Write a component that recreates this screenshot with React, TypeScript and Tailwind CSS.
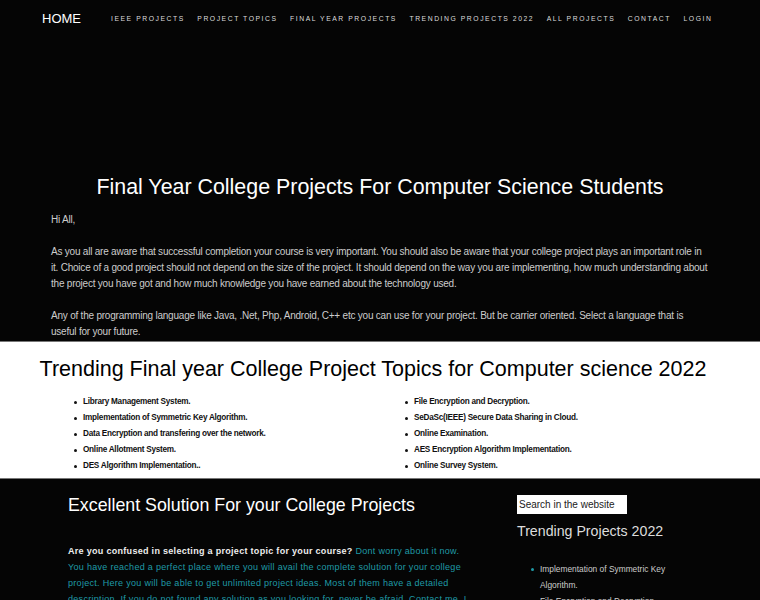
const NAV = ["IEEE PROJECTS", "PROJECT TOPICS", "FINAL YEAR PROJECTS", "TRENDING PROJECTS 2022", "ALL PROJECTS", "CONTACT", "LOGIN"];

const LEFT = [
  "Library Management System.",
  "Implementation of Symmetric Key Algorithm.",
  "Data Encryption and transfering over the network.",
  "Online Allotment System.",
  "DES Algorithm Implementation..",
];

const RIGHT = [
  "File Encryption and Decryption.",
  "SeDaSc(IEEE) Secure Data Sharing in Cloud.",
  "Online Examination.",
  "AES Encryption Algorithm Implementation.",
  "Online Survey System.",
];

function TopicList({ items }: { items: string[] }) {
  return (
    <ul className="flex flex-col">
      {items.map((t) => (
        <li key={t} className="flex h-4 items-center gap-[6px] whitespace-nowrap text-[8.2px] font-bold tracking-[-0.25px] text-[#111]">
          <span className="h-[3px] w-[3px] rounded-full bg-[#111]" />
          {t}
        </li>
      ))}
    </ul>
  );
}

export default function App() {
  return (
    <div className="min-h-[600px] overflow-hidden bg-[#050505] font-['Liberation_Sans',Arial,sans-serif]">
      <nav className="flex h-[38px] items-center whitespace-nowrap pl-[42px]">
        <span className="w-[69px] shrink-0 text-[13px] text-white">HOME</span>
        <div className="flex gap-[12.5px]">
          {NAV.map((n) => (
            <span key={n} className="shrink-0 text-[6.8px] tracking-[1.55px] text-[#ddd]">{n}</span>
          ))}
        </div>
      </nav>

      <section className="px-[51px] pb-[1px] pt-[136px]">
        <h1 className="text-center text-[21.4px] leading-[26px] text-white">Final Year College Projects For Computer Science Students</h1>
        <div className="mt-[12px] space-y-4 text-[10px] leading-4 tracking-[-0.22px] text-[#ccc]">
          <p>Hi All,</p>
          <p>
            As you all are aware that successful completion your course is very important. You should also be aware that your college project plays an important role in it. Choice of a good project should not depend on the size of the project. It should depend on the way you are implementing, how much understanding about the project you have got and how much knowledge you have earned about the technology used.
          </p>
          <p>
            Any of the programming language like Java, .Net, Php, Android, C++ etc you can use for your project. But be carrier oriented. Select a language that is useful for your future.
          </p>
        </div>
      </section>

      <section className="border-y border-[#777] bg-white pb-[4px] pt-[13px]">
        <h2 className="pr-[14px] text-center text-[21.5px] leading-[28px] text-black">Trending Final year College Project Topics for Computer science 2022</h2>
        <div className="mt-[11px] flex pl-[74px]">
          <div className="w-[331px]">
            <TopicList items={LEFT} />
          </div>
          <TopicList items={RIGHT} />
        </div>
      </section>

      <section className="flex pt-[14px]">
        <div className="w-[472px] shrink-0 pl-[68px]">
          <h3 className="whitespace-nowrap text-[17.8px] leading-6 text-white">Excellent Solution For your College Projects</h3>
          <p className="mt-[26px] text-[9px] leading-4 tracking-[0.3px] text-[#1f9aa6]">
            <b className="text-[#eee]">Are you confused in selecting a project topic for your course?</b> Dont worry about it now. You have reached a perfect place where you will avail the complete solution for your college project. Here you will be able to get unlimited project ideas. Most of them have a detailed description. If you do not found any solution as you looking for, never be afraid. Contact me. I will help you.
          </p>
        </div>
        <div className="-mt-[2px] w-[243px] pl-[45px]">
          <input
            placeholder="Search in the website"
            className="h-[19px] w-[110px] bg-white px-[2px] text-[10px] text-black placeholder:text-[#222]"
          />
          <h4 className="mt-[6px] whitespace-nowrap text-[14.2px] leading-5 text-[#ddd]">Trending Projects 2022</h4>
          <ul className="mt-[20px] pl-[14px] text-[8.4px] leading-4 text-[#ccc]">
            <li className="flex gap-[6px]">
              <span className="mt-[7px] h-[3px] w-[3px] shrink-0 rounded-full bg-[#1f9aa6]" />
              <span className="w-[130px]">Implementation of Symmetric Key Algorithm.</span>
            </li>
            <li className="flex gap-[6px]">
              <span className="mt-[7px] h-[3px] w-[3px] shrink-0 rounded-full bg-[#1f9aa6]" />
              <span className="w-[130px]">File Encryption and Decryption.</span>
            </li>
          </ul>
        </div>
      </section>
    </div>
  );
}
